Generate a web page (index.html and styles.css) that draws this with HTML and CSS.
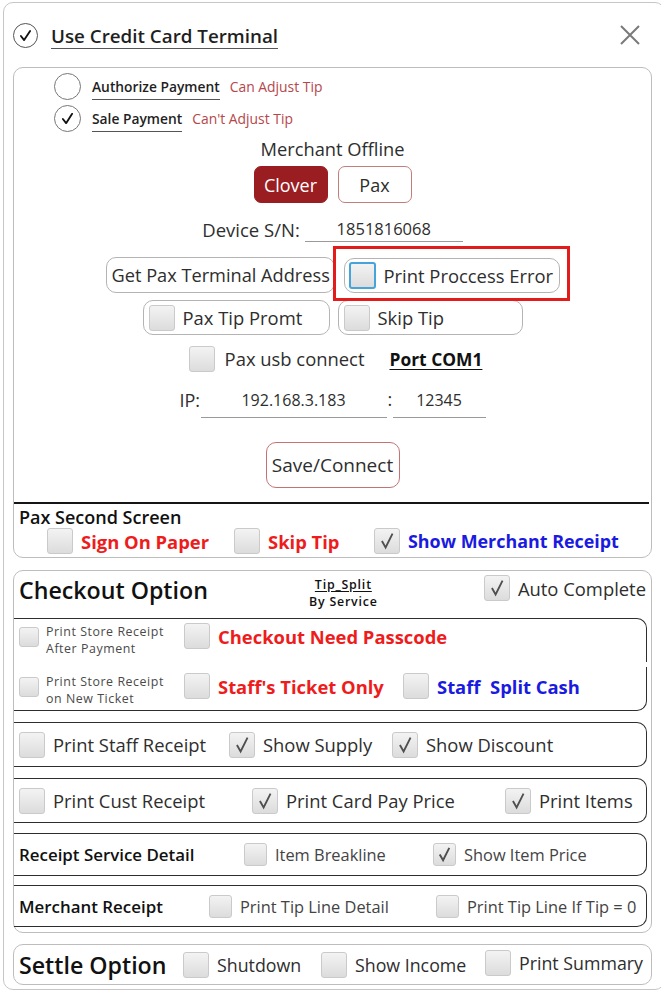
FILE: index.html
```html
<!DOCTYPE html>
<html lang="en">
<head>
<meta charset="utf-8">
<title>Credit Card Terminal Settings</title>
<link rel="stylesheet" href="styles.css">
</head>
<body>
<div class="frame">
  <header class="head">
    <span class="round on"><svg viewBox="0 0 25 25"><path d="M7.5 13 L11 17.5 L17.5 7.5"/></svg></span>
    <span class="head-title">Use Credit Card Terminal</span>
    <span class="close"><svg viewBox="0 0 20 20"><path d="M1 1 L19 19 M19 1 L1 19"/></svg></span>
  </header>

  <section class="panel terminal">
    <div class="pay-row">
      <span class="round big"></span>
      <span class="pay-name">Authorize Payment</span>
      <span class="pay-note">Can Adjust Tip</span>
    </div>
    <div class="pay-row">
      <span class="round big on"><svg viewBox="0 0 27 27"><path d="M8.5 14 L12 18.5 L18.5 8.5"/></svg></span>
      <span class="pay-name">Sale Payment</span>
      <span class="pay-note">Can't Adjust Tip</span>
    </div>

    <div class="mid-title">Merchant Offline</div>
    <div class="seg">
      <span class="seg-btn active">Clover</span>
      <span class="seg-btn">Pax</span>
    </div>

    <div class="sn-row">
      <span class="sn-label">Device S/N:</span>
      <span class="field sn-field">1851816068</span>
    </div>

    <div class="btn-row">
      <span class="pill addr">Get Pax Terminal Address</span>
      <span class="marked">
        <span class="pill opt err"><span class="cb focus"></span>Print Proccess Error</span>
      </span>
    </div>

    <div class="tip-row">
      <span class="pill opt tip-promt"><span class="cb"></span>Pax Tip Promt</span>
      <span class="pill opt tip-skip"><span class="cb"></span>Skip Tip</span>
    </div>

    <div class="usb-row">
      <span class="cb usb-cb"></span>
      <span class="usb-text">Pax usb connect</span>
      <span class="port">Port COM1</span>
    </div>

    <div class="ip-row">
      <span class="ip-label">IP:</span>
      <span class="field ip-field">192.168.3.183</span>
      <span class="ip-colon">:</span>
      <span class="field port-field">12345</span>
    </div>

    <div class="save-row"><span class="save">Save/Connect</span></div>

    <div class="rule"></div>
    <div class="second-title">Pax Second Screen</div>
    <div class="grid-row second-row">
      <label class="opt-item"><span class="cb"></span><span class="red">Sign On Paper</span></label>
      <label class="opt-item"><span class="cb"></span><span class="red">Skip Tip</span></label>
      <label class="opt-item"><span class="cb on"><svg viewBox="0 0 26 26"><path d="M7.5 13 L11.5 20 L19 5"/></svg></span><span class="blue">Show Merchant Receipt</span></label>
    </div>
  </section>

  <section class="panel checkout">
    <div class="co-head">
      <span class="big-title">Checkout Option</span>
      <span class="tip-split"><span class="ts-top">Tip_Split</span><span class="ts-bottom">By Service</span></span>
      <label class="opt-item auto"><span class="cb on"><svg viewBox="0 0 26 26"><path d="M7.5 13 L11.5 20 L19 5"/></svg></span><span>Auto Complete</span></label>
    </div>

    <div class="sub upper">
      <div class="grid-row row-a1">
        <label class="small-opt"><span class="cb small"></span><span class="small-text"><span class="line">Print Store Receipt</span><span class="line">After Payment</span></span></label>
        <label class="opt-item top"><span class="cb"></span><span class="red">Checkout Need Passcode</span></label>
      </div>
    </div>
    <div class="sub lower">
      <div class="grid-row row-a2">
        <label class="small-opt"><span class="cb small"></span><span class="small-text"><span class="line">Print Store Receipt</span><span class="line">on New Ticket</span></span></label>
        <label class="opt-item top"><span class="cb"></span><span class="red">Staff's Ticket Only</span></label>
        <label class="opt-item top"><span class="cb"></span><span class="blue">Staff&nbsp; Split Cash</span></label>
      </div>
    </div>

    <div class="sub box row-b">
      <label class="opt-item"><span class="cb"></span><span>Print Staff Receipt</span></label>
      <label class="opt-item"><span class="cb on"><svg viewBox="0 0 26 26"><path d="M7.5 13 L11.5 20 L19 5"/></svg></span><span>Show Supply</span></label>
      <label class="opt-item"><span class="cb on"><svg viewBox="0 0 26 26"><path d="M7.5 13 L11.5 20 L19 5"/></svg></span><span>Show Discount</span></label>
    </div>

    <div class="sub box row-c">
      <label class="opt-item"><span class="cb"></span><span>Print Cust Receipt</span></label>
      <label class="opt-item"><span class="cb on"><svg viewBox="0 0 26 26"><path d="M7.5 13 L11.5 20 L19 5"/></svg></span><span>Print Card Pay Price</span></label>
      <label class="opt-item"><span class="cb on"><svg viewBox="0 0 26 26"><path d="M7.5 13 L11.5 20 L19 5"/></svg></span><span>Print Items</span></label>
    </div>

    <div class="sub box row-d">
      <span class="row-label">Receipt Service Detail</span>
      <label class="opt-item sm"><span class="cb mid"></span><span>Item Breakline</span></label>
      <label class="opt-item sm"><span class="cb mid on"><svg viewBox="0 0 22 22"><path d="M6 11 L9.5 17 L16 4"/></svg></span><span>Show Item Price</span></label>
    </div>

    <div class="sub box row-e">
      <span class="row-label">Merchant Receipt</span>
      <label class="opt-item sm"><span class="cb mid"></span><span>Print Tip Line Detail</span></label>
      <label class="opt-item sm"><span class="cb mid"></span><span>Print Tip Line If Tip = 0</span></label>
    </div>
  </section>

  <section class="panel settle">
    <span class="big-title">Settle Option</span>
    <label class="opt-item"><span class="cb"></span><span>Shutdown</span></label>
    <label class="opt-item"><span class="cb"></span><span>Show Income</span></label>
    <label class="opt-item raised"><span class="cb"></span><span>Print Summary</span></label>
  </section>
</div>
</body>
</html>
```

FILE: styles.css
```css
* {
  box-sizing: border-box;
}

html,
body {
  margin: 0;
  padding: 0;
}

body {
  width: 661px;
  height: 992px;
  overflow: hidden;
  background: #fff;
  font-family: "Open Sans", "Noto Sans", sans-serif;
  color: #2e2e2e;
}

/* outer dialog frame */
.frame {
  margin: 2px 0 0 3px;
  width: 662px;
  height: 988px;
  border: 1px solid #c6c6c6;
  border-radius: 10px;
  padding-left: 9px;
}

.head {
  display: flex;
  align-items: center;
  height: 64px;
  width: 639px;
}

/* round check marks */
.round {
  flex: none;
  width: 25px;
  height: 25px;
  border: 1.3px solid #555;
  border-radius: 50%;
  display: flex;
}

.round svg {
  width: 100%;
  height: 100%;
}

.round path {
  fill: none;
  stroke: #111;
  stroke-width: 2;
  stroke-linecap: round;
  stroke-linejoin: round;
}

.round.big {
  width: 27px;
  height: 27px;
  border: 1px solid #777;
}

.head-title {
  margin-left: 13px;
  font-size: 18.8px;
  font-weight: 600;
  line-height: 24px;
  border-bottom: 1px solid #555;
  margin-top: 2px;
  color: #1f1f1f;
}

.close {
  margin-left: auto;
  margin-right: 12px;
  width: 20px;
  height: 20px;
  display: flex;
}

.close svg {
  width: 20px;
  height: 20px;
}

.close path {
  stroke: #7a7a7a;
  stroke-width: 2;
}

/* panels */
.panel {
  width: 639px;
  border: 1px solid #bdbdbd;
  border-radius: 10px;
}

.terminal {
  height: 491px;
  padding: 5px 0 0 40px;
  display: flex;
  flex-direction: column;
}

.pay-row {
  display: flex;
  align-items: center;
  height: 27px;
  margin-bottom: 5px;
}

.pay-name {
  margin-left: 11px;
  height: 27px;
  display: flex;
  align-items: center;
  font-size: 13.8px;
  font-weight: 600;
  border-bottom: 1px solid #555;
  color: #1f1f1f;
}

.pay-note {
  margin-left: 10px;
  font-size: 13.9px;
  color: #b5474b;
}

/* centered content column */
.mid-title,
.seg,
.sn-row,
.btn-row,
.tip-row,
.usb-row,
.ip-row,
.save-row {
  margin-left: -40px;
  display: flex;
  justify-content: center;
}

.mid-title {
  margin-top: 2px;
  height: 20px;
  line-height: 20px;
  font-size: 18.3px;
}

.seg {
  margin-top: 7px;
  gap: 10px;
}

.seg-btn {
  width: 74px;
  height: 37px;
  border: 1px solid #c27d7d;
  border-radius: 7px;
  display: flex;
  align-items: center;
  justify-content: center;
  font-size: 18px;
}

.seg-btn.active {
  background: #9a1d22;
  border-color: #9a1d22;
  color: #fff;
}

.sn-row {
  margin-top: 13px;
  height: 26px;
  align-items: stretch;
  font-size: 18.5px;
}

.sn-label {
  display: flex;
  align-items: center;
}

.field {
  display: flex;
  align-items: center;
  justify-content: center;
  border-bottom: 1px solid #9a9a9a;
  font-size: 16.5px;
}

.sn-field {
  margin-left: 5px;
  width: 158px;
}

.btn-row {
  margin-top: 15px;
  height: 36px;
  gap: 9px;
  align-items: flex-start;
}

.pill {
  border: 1px solid #b4b4b4;
  border-radius: 10px;
  display: flex;
  align-items: center;
  font-size: 18.4px;
  white-space: nowrap;
}

.addr {
  width: 229px;
  height: 36px;
  padding-left: 5px;
  font-size: 18.2px;
}

.opt {
  padding-left: 4px;
}

.opt .cb {
  margin-right: 8px;
}

.err {
  width: 216px;
  height: 35px;
  margin-top: 1px;
}

/* red attention frame drawn over the option */
.marked {
  position: relative;
  display: flex;
}

.marked::after {
  content: "";
  position: absolute;
  left: -11px;
  top: -11px;
  right: -10px;
  bottom: -8px;
  border: 3px solid #e31b1b;
}

.tip-row {
  margin-top: 7px;
  gap: 8px;
}

.tip-promt,
.tip-skip {
  height: 35px;
  padding-left: 5px;
}

.tip-promt {
  width: 187px;
}

.tip-skip {
  width: 185px;
}

.usb-row {
  margin-top: 11px;
  height: 25px;
  align-items: center;
  font-size: 18.4px;
  padding-left: 6px;
}

.usb-cb {
  width: 25px;
  height: 25px;
}

.usb-text {
  margin-left: 10px;
}

.port {
  margin-left: 25px;
  font-size: 17.4px;
  font-weight: 700;
  text-decoration: underline;
  text-underline-offset: 3px;
  color: #111;
}

.ip-row {
  margin-top: 7px;
  height: 40px;
  align-items: stretch;
  font-size: 18px;
}

.ip-label {
  display: flex;
  align-items: center;
  padding-top: 4px;
  width: 21px;
}

.ip-field,
.port-field {
  padding-top: 4px;
  font-size: 16px;
}

.ip-field {
  width: 186px;
}

.ip-colon {
  display: flex;
  align-items: center;
  padding-top: 2px;
  width: 4px;
  margin: 0 1px;
}

.port-field {
  width: 93px;
}

.save-row {
  margin-top: 24px;
}

.save {
  width: 134px;
  height: 46px;
  border: 1.5px solid #c27474;
  border-radius: 10px;
  display: flex;
  align-items: center;
  justify-content: center;
  font-size: 19px;
}

.rule {
  margin: 14px 2px 0 -40px;
  height: 2px;
  background: #151515;
}

.second-title {
  margin: 4px 0 0 -35px;
  height: 18px;
  line-height: 18px;
  font-size: 18px;
  font-weight: 600;
  color: #111;
}

/* checkboxes */
.cb {
  flex: none;
  width: 26px;
  height: 26px;
  border: 1px solid #cacaca;
  border-radius: 3px;
  background: linear-gradient(#f3f3f3, #dcdcdc);
  display: flex;
}

.cb svg {
  width: 100%;
  height: 100%;
}

.cb path {
  fill: none;
  stroke: #4f4f4f;
  stroke-width: 2;
}

.cb.focus {
  width: 27px;
  height: 27px;
  border: 2px solid #45a5da;
}

.cb.small {
  width: 20px;
  height: 20px;
}

.cb.mid {
  width: 23px;
  height: 23px;
}

.red {
  color: #ee1c1c;
  font-weight: 700;
}

.blue {
  color: #1a1ae0;
  font-weight: 700;
}

.grid-row {
  display: grid;
  align-items: center;
}

.opt-item {
  display: flex;
  align-items: center;
  gap: 8px;
  font-size: 18.4px;
  white-space: nowrap;
}

.second-row {
  margin: 2px 0 0 -7px;
  height: 26px;
  grid-template-columns: 187px 140px auto;
}

.second-row .blue {
  font-size: 17.9px;
}

/* checkout section */
.checkout {
  margin-top: 12px;
  height: 363px;
  padding: 0 4px 0 0;
}

.co-head {
  display: flex;
  align-items: center;
  height: 38px;
  margin-bottom: 9px;
  padding: 0 1px 0 5px;
}

.big-title {
  font-size: 23.2px;
  font-weight: 600;
  color: #111;
  width: 186px;
  white-space: nowrap;
}

.tip-split {
  margin-left: 104px;
  display: flex;
  flex-direction: column;
  align-items: center;
  font-size: 12.4px;
  font-weight: 600;
  line-height: 17px;
  letter-spacing: 0.8px;
  padding-top: 5px;
  color: #111;
}

.ts-top {
  text-decoration: underline;
  text-underline-offset: 2px;
}

.auto {
  margin-left: auto;
  margin-bottom: 4px;
}

.sub {
  border: 1px solid #2e2e2e;
  border-left: none;
}

.upper {
  height: 44px;
  border-bottom: none;
  border-radius: 0 10px 0 0;
  padding: 4px 0 0 5px;
}

.lower {
  margin-top: 5px;
  height: 44px;
  border-top: none;
  border-radius: 0 0 10px 0;
  padding: 6px 0 0 5px;
}

.row-a1,
.row-a2 {
  align-items: start;
}

.row-a1 {
  grid-template-columns: 165px auto;
}

.row-a2 {
  grid-template-columns: 165px 219px auto;
}

.small-opt {
  display: flex;
  align-items: flex-start;
  gap: 7px;
}

.small-opt .cb {
  margin-top: 4px;
}

.small-text {
  display: flex;
  flex-direction: column;
  font-size: 12.4px;
  line-height: 17px;
  letter-spacing: 0.55px;
  color: #4a4a4a;
  white-space: nowrap;
}

.box {
  display: grid;
  align-items: center;
  border-radius: 0 10px 10px 0;
  padding-left: 5px;
}

.row-b {
  margin-top: 11px;
  height: 45px;
  grid-template-columns: 210px 163px auto;
}

.row-c {
  margin-top: 11px;
  height: 45px;
  grid-template-columns: 233px 253px auto;
}

.row-d {
  margin-top: 10px;
  height: 43px;
  grid-template-columns: 225px 189px auto;
}

.row-e {
  margin-top: 9px;
  height: 42px;
  grid-template-columns: 190px 227px auto;
}

.row-label {
  font-size: 16.9px;
  font-weight: 600;
  color: #111;
  white-space: nowrap;
}

.opt-item.sm {
  font-size: 16.4px;
  color: #444;
}

/* settle section */
.settle {
  margin-top: 11px;
  height: 41px;
  display: grid;
  grid-template-columns: 164px 138px 164px auto;
  align-items: center;
  padding-left: 5px;
}

.settle .opt-item {
  font-size: 17.8px;
}

.raised {
  margin-top: -4px;
}
```
